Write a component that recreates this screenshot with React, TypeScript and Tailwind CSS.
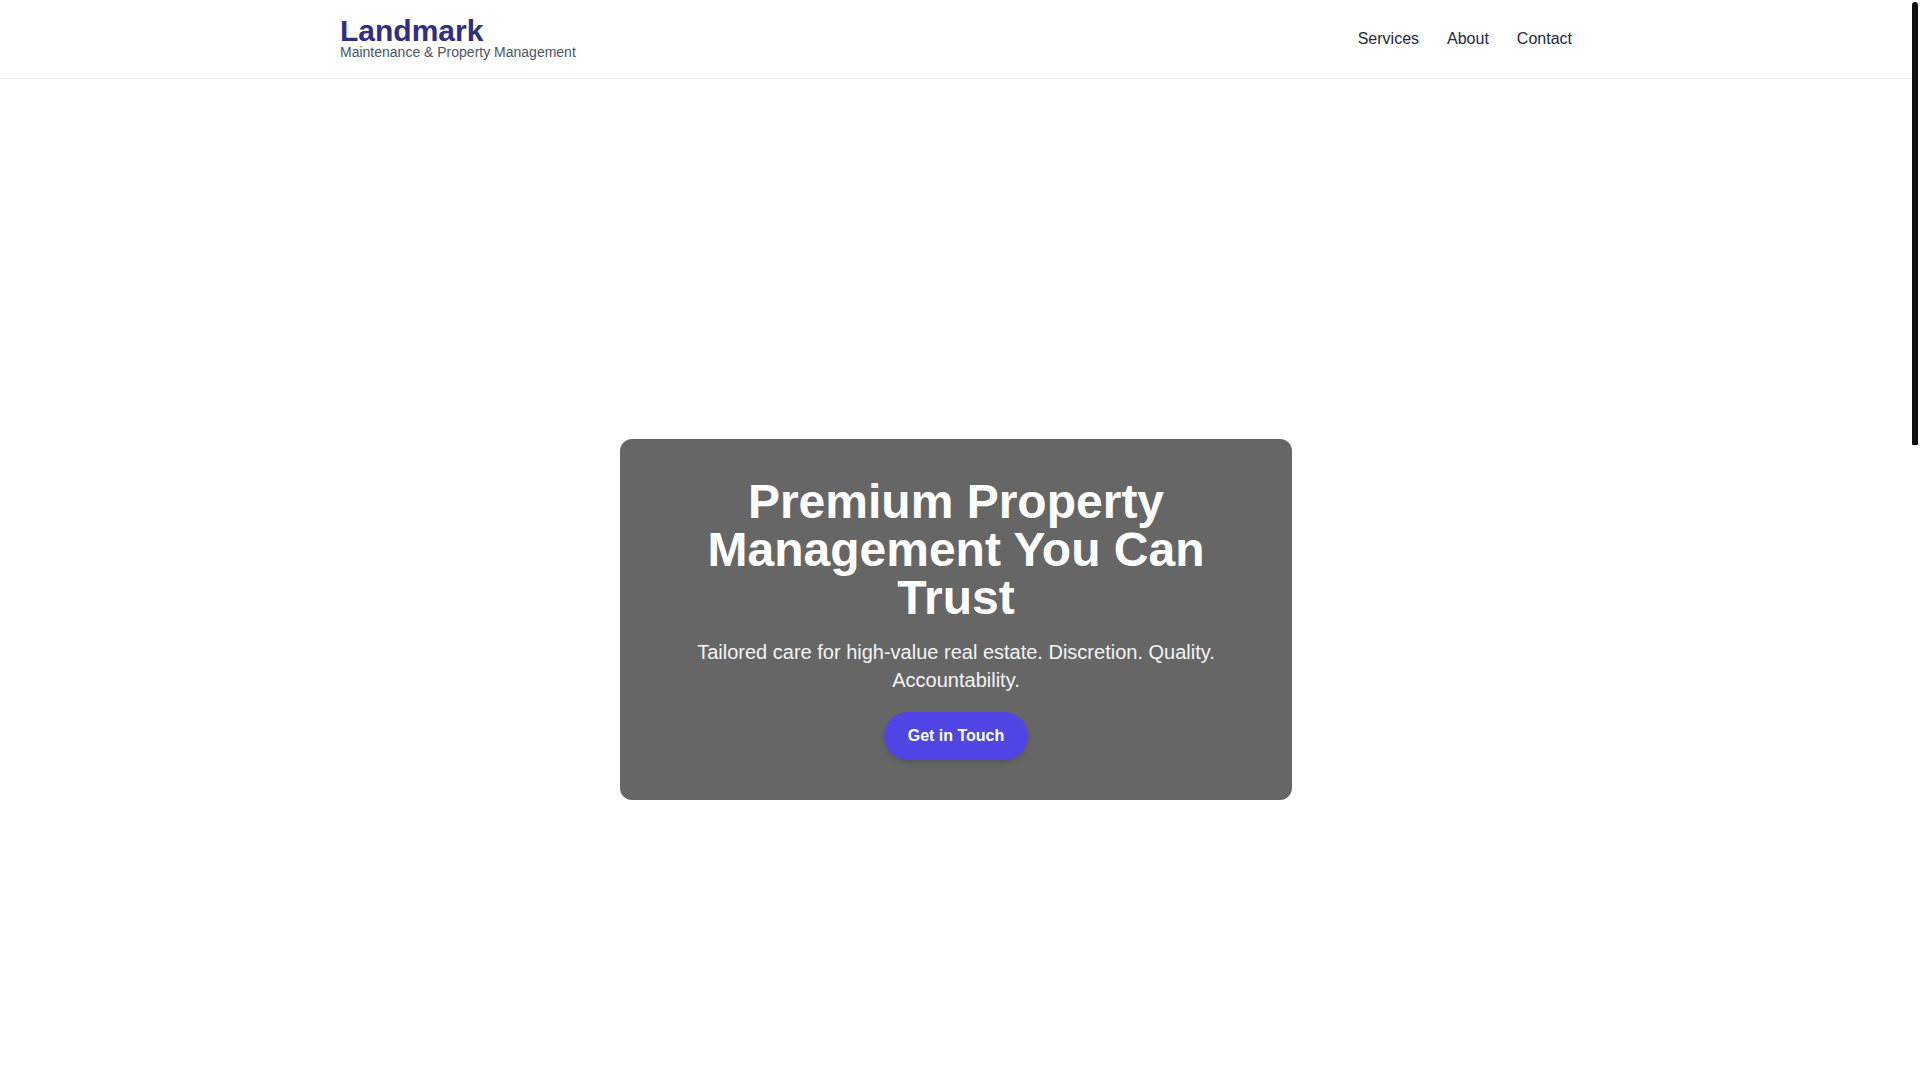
import React from 'react';

const services = [
  {
    title: 'Preventive Maintenance',
    text: 'Scheduled inspections and upkeep that keep every system in your property running quietly and reliably.',
  },
  {
    title: 'Property Management',
    text: 'Tenant relations, vendor coordination and transparent reporting handled by a dedicated manager.',
  },
  {
    title: 'Renovation Oversight',
    text: 'From planning to final walkthrough, we supervise contractors so your project stays on time and on budget.',
  },
];

export default function App() {
  return (
    <div className="flex h-screen bg-white font-['Liberation_Sans',Arial,sans-serif] text-[#1f2937]">
      <div className="flex-1 min-w-0 h-screen overflow-y-auto">
        {/* Header */}
        <header className="bg-white border-b border-gray-200">
          <div className="max-w-7xl mx-auto px-6 h-[78px] flex items-center justify-between">
            <div className="flex flex-col self-start pt-[17px]">
              <a href="#" className="text-3xl font-bold leading-7 text-[#312e81]">
                Landmark
              </a>
              <span className="-mt-px text-sm leading-4 text-[#4b5563]">Maintenance &amp; Property Management</span>
            </div>
            <nav className="flex items-center gap-7 text-base">
              <a href="#services" className="hover:text-[#4f46e5]">Services</a>
              <a href="#about" className="hover:text-[#4f46e5]">About</a>
              <a href="#contact" className="hover:text-[#4f46e5]">Contact</a>
            </nav>
          </div>
        </header>

        {/* Hero */}
        <section className="h-screen flex items-center justify-center bg-white bg-cover bg-center px-6">
          <div className="w-full max-w-2xl bg-black/60 rounded-xl px-10 pt-[39px] pb-10 text-center text-white">
            <h1 className="text-5xl font-bold leading-none">Premium Property Management You Can Trust</h1>
            <p className="mt-4 text-xl leading-7 text-gray-100">
              Tailored care for high-value real estate. Discretion. Quality. Accountability.
            </p>
            <a
              href="#contact"
              className="inline-block mt-[18px] px-6 py-3 rounded-full bg-[#4f46e5] text-white font-semibold shadow-md hover:bg-[#4338ca]"
            >
              Get in Touch
            </a>
          </div>
        </section>

        {/* Services */}
        <section id="services" className="py-20 bg-gray-50">
          <div className="max-w-7xl mx-auto px-6">
            <h2 className="text-3xl font-bold text-center text-[#312e81]">Our Services</h2>
            <p className="mt-3 text-center text-[#4b5563]">Comprehensive solutions for owners who expect more.</p>
            <div className="mt-12 grid grid-cols-3 gap-8">
              {services.map((s) => (
                <div key={s.title} className="bg-white rounded-xl shadow p-8 h-[240px]">
                  <h3 className="text-xl font-semibold text-gray-900">{s.title}</h3>
                  <p className="mt-3 text-[#4b5563] leading-7">{s.text}</p>
                </div>
              ))}
            </div>
          </div>
        </section>

        {/* About */}
        <section id="about" className="py-20">
          <div className="max-w-3xl mx-auto px-6 text-center">
            <h2 className="text-3xl font-bold text-[#312e81]">About Landmark</h2>
            <p className="mt-6 text-lg leading-8 text-[#4b5563]">
              Landmark is a boutique maintenance and property management firm serving discerning owners. We combine
              hands-on craftsmanship with meticulous administration, so your property is protected, maintained and
              managed to the highest standard.
            </p>
          </div>
        </section>

        {/* Contact */}
        <section id="contact" className="py-20 bg-gray-50">
          <div className="max-w-xl mx-auto px-6">
            <h2 className="text-3xl font-bold text-center text-[#312e81]">Contact Us</h2>
            <form className="mt-10 flex flex-col gap-4">
              <input className="border border-gray-300 rounded-lg px-4 py-3 bg-white" placeholder="Name" />
              <input className="border border-gray-300 rounded-lg px-4 py-3 bg-white" placeholder="Email" />
              <textarea className="border border-gray-300 rounded-lg px-4 py-3 bg-white h-32" placeholder="Message" />
              <button type="button" className="self-center px-6 py-3 rounded-full bg-[#4f46e5] text-white font-semibold">
                Send Message
              </button>
            </form>
          </div>
        </section>

        {/* Footer */}
        <footer className="py-6 border-t border-gray-200 text-center text-sm text-gray-500">
          © 2024 Landmark Maintenance &amp; Property Management
        </footer>
      </div>

      {/* Scrollbar gutter */}
      <div className="w-2 shrink-0 bg-white pt-0.5 pr-0.5">
        <div className="h-[443px] w-1.5 rounded-t-sm rounded-b-[1px] bg-[#111111]" />
      </div>
    </div>
  );
}
